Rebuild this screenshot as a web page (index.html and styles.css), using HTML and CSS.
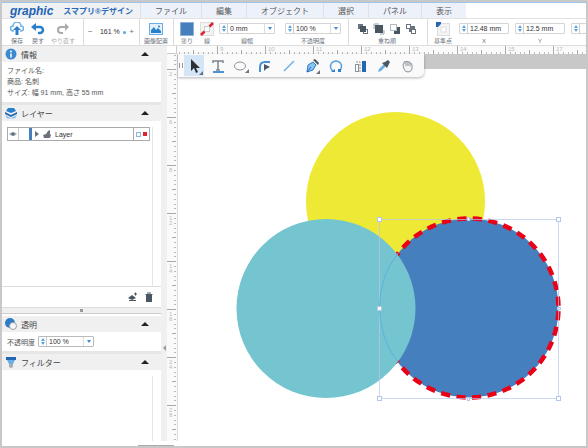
FILE: index.html
```html
<!DOCTYPE html>
<html lang="ja">
<head>
    <meta charset="UTF-8">
    <meta name="viewport" content="width=device-width, initial-scale=1.0">
    <title>スマプリ®デザイン</title>
    <link rel="stylesheet" href="styles.css">
</head>
<body>
    <div class="app">
        <header class="menubar">
            <div class="brand">
                <span class="logo">graphic</span>
                <span class="product">スマプリ®デザイン</span>
            </div>
            <nav class="menu">
                <button>ファイル</button>
                <button>編集</button>
                <button>オブジェクト</button>
                <button>選択</button>
                <button>パネル</button>
                <button>表示</button>
            </nav>
        </header>

        <!-- Toolbar -->
        <div class="toolbar">
            <div class="group group-file">
                <button class="item">
                    <svg viewBox="0 0 14 14"><path d="M4 9H3a2.5 2.5 0 0 1 0-5 4 4 0 0 1 8 0 2.500 2.500 0 0 1 0 5h-1" fill="none" stroke="#6aaee6" stroke-width="1.5"/><path d="M7 4l4 4H8.500v5h-3V8H3z" fill="#2a7fcb"/></svg>
                    <span>保存</span>
                </button>
                <button class="item">
                    <svg viewBox="0 0 14 14"><path d="M3 5h6a3 3 0 0 1 0 6H7" fill="none" stroke="#2a7fcb" stroke-width="2.5"/><path d="M0 5l5-4v8z" fill="#2a7fcb"/></svg>
                    <span>戻す</span>
                </button>
                <button class="item item-wide disabled">
                    <svg viewBox="0 0 14 14"><path d="M10 5H5a3 3 0 0 0 0 6h2" fill="none" stroke="#aaa" stroke-width="2"/><path d="M13 5L9 1v8z" fill="#aaa"/></svg>
                    <span>やり直す</span>
                </button>
            </div>
            <div class="group group-zoom">
                <button aria-label="縮小">−</button>
                <span class="zoom-value">161 %</span>
                <span class="dot"></span>
                <button aria-label="拡大">+</button>
            </div>
            <div class="group group-image">
                <button class="item item-wide">
                    <svg viewBox="0 0 14 14"><rect x="0.5" y="1.5" width="13" height="11" fill="#e4f1fc" stroke="#6aaee6"/><path d="M2 11V8l3-3 2 3 2-2 3 3v2z" fill="#2a7fcb"/><circle cx="10" cy="4.5" r="1" fill="#2a7fcb"/></svg>
                    <span>画像配置</span>
                </button>
            </div>
            <div class="group group-style">
                <button class="item">
                    <svg viewBox="0 0 14 14"><rect x="0.5" y="0.5" width="13" height="13" fill="#467fbd" stroke="#8fb0d6"/></svg>
                    <span>塗り</span>
                </button>
                <button class="item">
                    <svg viewBox="0 0 14 14"><rect x="0.5" y="0.5" width="13" height="13" fill="#f4f4f4" stroke="#ddd"/><rect x="4.5" y="4.5" width="5" height="5" fill="#fff" stroke="#ccc"/><path d="M1 13l3.500-3.500M9.500 4.500L13 1" stroke="#d8232a" stroke-width="2.5"/></svg>
                    <span>線</span>
                </button>
                <div class="field">
                    <div class="combo">
                        <button class="stepper" aria-label="線幅の増減"></button>
                        <input type="text" id="strokeWidth" value="0 mm">
                        <button class="arrow" aria-label="線幅の一覧"></button>
                    </div>
                    <label for="strokeWidth">線幅</label>
                </div>
                <div class="field">
                    <div class="combo">
                        <button class="stepper" aria-label="不透明度の増減"></button>
                        <input type="text" id="opacityTop" value="100 %">
                        <button class="arrow" aria-label="不透明度の一覧"></button>
                    </div>
                    <label for="opacityTop">不透明度</label>
                </div>
            </div>
            <div class="group group-order">
                <div class="order-icons">
                    <button aria-label="前面へ"><svg viewBox="0 0 14 14"><rect x="2" y="2" width="5" height="5" fill="#68737f"/><rect x="7.5" y="7.5" width="4" height="4" fill="#fff" stroke="#68737f"/><rect x="4" y="4" width="6" height="6" fill="#4b5663"/></svg></button>
                    <button aria-label="最前面へ"><svg viewBox="0 0 14 14"><path d="M2 7V2h5M12 8v4H8" fill="none" stroke="#9aa2ab"/><rect x="3" y="3" width="8" height="8" fill="#4b5663"/></svg></button>
                    <button aria-label="最背面へ"><svg viewBox="0 0 14 14"><rect x="6" y="5" width="6" height="7" fill="#4b5663"/><rect x="2.5" y="2.5" width="6" height="6" fill="#fff" stroke="#b4bac1"/></svg></button>
                    <button aria-label="背面へ"><svg viewBox="0 0 14 14"><rect x="5" y="4" width="6" height="6" fill="#68737f"/><rect x="2.5" y="2.5" width="4" height="4" fill="#fff" stroke="#68737f"/><rect x="7.5" y="7.5" width="4" height="4" fill="#fff" stroke="#68737f"/></svg></button>
                </div>
                <span>重ね順</span>
            </div>
            <div class="group group-pos">
                <button class="item">
                    <svg viewBox="0 0 14 14"><rect x="1.5" y="1.5" width="12" height="12" fill="#f4f4f4" stroke="#ddd"/><rect x="5" y="5" width="5" height="5" fill="#fff" stroke="#ddd"/><path d="M0 0h5v2L2 5H0z" fill="#2367b4"/></svg>
                    <span>基準点</span>
                </button>
                <div class="field">
                    <div class="combo combo-short">
                        <button class="stepper" aria-label="Xの増減"></button>
                        <input type="text" id="posX" value="12.48 mm">
                    </div>
                    <label for="posX">X</label>
                </div>
                <div class="field">
                    <div class="combo combo-short">
                        <button class="stepper" aria-label="Yの増減"></button>
                        <input type="text" id="posY" value="12.5 mm">
                    </div>
                    <label for="posY">Y</label>
                </div>
                <div class="field">
                    <div class="combo combo-short">
                        <button class="stepper" aria-label="幅の増減"></button>
                        <input type="text" aria-label="幅">
                    </div>
                </div>
            </div>
        </div>

        <div class="workspace">
            <!-- Panels -->
            <aside class="panels">
                <section>
                    <h2>
                        <svg viewBox="0 0 12 12"><circle cx="6" cy="6" r="5.5" fill="#3b8ad0"/><circle cx="6" cy="3.5" r="1" fill="#fff"/><path d="M6 5.500v4" stroke="#fff" stroke-width="1.5"/></svg>
                        情報<button class="fold" aria-label="閉じる"></button>
                    </h2>
                    <div class="info">
                        <p>ファイル名:</p>
                        <p>商品: 名刺</p>
                        <p>サイズ: 幅 91 mm, 高さ 55 mm</p>
                    </div>
                </section>
                <section>
                    <h2>
                        <svg viewBox="0 0 12 12"><path d="M1 4l2-3h6l2 3-5 2z" fill="#2a7fcb"/><path d="M0 5l6 3 6-3v2l-6 3-6-3z" fill="#2367b4"/><path d="M0 8l6 3 6-3-2 3.500H2z" fill="#8cc2ee"/></svg>
                        レイヤー<button class="fold" aria-label="閉じる"></button>
                    </h2>
                    <div class="layers">
                        <div class="layer">
                            <button class="eye" aria-label="表示切替"><svg viewBox="0 0 8 8"><path d="M0 4q4-4 8 0-4 4-8 0z" fill="#a5adb5"/><circle cx="4" cy="4" r="1.5" fill="#5a6672"/></svg></button>
                            <span class="layer-name">
                                <svg class="caret" viewBox="0 0 4 6"><path d="M0 0l4 3-4 3z" fill="#68737f"/></svg>
                                <svg class="sheet" viewBox="0 0 8 8"><path d="M0 5l3-1 2-3 2-1v4l1 1-1 3H1z" fill="#68737f"/></svg>
                                Layer
                            </span>
                            <span class="layer-mark"><i class="mark-target"></i><i class="mark-color"></i></span>
                        </div>
                    </div>
                    <div class="layer-actions">
                        <button aria-label="レイヤー追加"><svg viewBox="0 0 10 10"><path d="M0 6l4-3 4 3-4 2zM1 8h7v1H1z" fill="#4b5663"/><path d="M6 2h3M7.500 0.500v3" stroke="#4b5663"/></svg></button>
                        <button aria-label="削除"><svg viewBox="0 0 10 10"><path d="M3 1h4M1.500 2.500h7" stroke="#4b5663"/><path d="M2 3h6v7H2z" fill="#4b5663"/></svg></button>
                    </div>
                    <div class="splitter"><i></i></div>
                </section>
                <section>
                    <h2>
                        <svg viewBox="0 0 12 12"><circle cx="5" cy="5" r="5" fill="#2e7cc8"/><circle cx="8" cy="8" r="3.5" fill="#f8f8f8" stroke="#9aa2ab"/></svg>
                        透明<button class="fold" aria-label="閉じる"></button>
                    </h2>
                    <div class="opacity-row">
                        <label for="opacity">不透明度</label>
                        <div class="combo">
                            <button class="stepper" aria-label="増減"></button>
                            <input type="text" id="opacity" value="100 %">
                            <button class="arrow" aria-label="一覧"></button>
                        </div>
                    </div>
                </section>
                <section class="filter">
                    <h2>
                        <svg viewBox="0 0 12 12"><path d="M1 1h10v3H1z" fill="#2367b4"/><path d="M2 4h8L8 8H4z" fill="#6aaee6"/><path d="M4 8h4v3L6 12l-2-1z" fill="#a5adb5"/></svg>
                        フィルター<button class="fold" aria-label="閉じる"></button>
                    </h2>
                    <div class="filter-body"></div>
                </section>
            </aside>
            <div class="divider"><i></i></div>

            <!-- Canvas -->
            <main class="stage">
                <div class="corner"></div>
                <svg class="ruler-h" xmlns="http://www.w3.org/2000/svg">
                    <defs>
                        <pattern id="ticksH" x="40" width="48" height="8" patternUnits="userSpaceOnUse">
                            <path d="M5.500 6v2M10.500 6v2M15.500 6v2M19.500 6v2M29.500 6v2M34.500 6v2M39.500 6v2M43.500 6v2" stroke="#bbb"/>
                            <path d="M0.500 0v8M24.500 4v4" stroke="#aaa"/>
                        </pattern>
                    </defs>
                    <rect width="100%" height="8" fill="url(#ticksH)"/>
                    <text x="43" y="5">9</text>
                    <text x="91" y="5">10</text>
                    <text x="139" y="5">11</text>
                    <text x="187" y="5">12</text>
                    <text x="235" y="5">13</text>
                    <text x="283" y="5">14</text>
                    <text x="331" y="5">15</text>
                    <text x="379" y="5">17</text>
                </svg>
                <svg class="ruler-v" xmlns="http://www.w3.org/2000/svg">
                    <defs>
                        <pattern id="ticksV" y="63" width="10" height="48" patternUnits="userSpaceOnUse">
                            <path d="M7 5.500h2M7 10.500h2M7 15.500h2M7 19.500h2M7 29.500h2M7 34.500h2M7 39.500h2M7 43.500h2" stroke="#bbb"/>
                            <path d="M0 0.500h9M5 24.500h4" stroke="#aaa"/>
                        </pattern>
                    </defs>
                    <rect width="10" height="100%" fill="url(#ticksV)"/>
                    <text x="2" y="22">2</text>
                    <text x="2" y="70">6</text>
                    <text x="2" y="118">8</text>
                    <text x="2" y="166">1</text><text x="2" y="171">2</text>
                    <text x="2" y="214">1</text><text x="2" y="219">4</text>
                    <text x="2" y="262">1</text><text x="2" y="267">8</text>
                    <text x="2" y="310">2</text><text x="2" y="315">4</text>
                    <text x="2" y="358">2</text><text x="2" y="363">8</text>
                </svg>
                <div class="canvas">
                    <svg class="art" viewBox="1 0 408 376" preserveAspectRatio="xMinYMin meet">
                        <circle cx="218.5" cy="132.5" r="89.5" fill="#eee935"/>
                        <circle cx="292" cy="239" r="89.5" fill="#467fbd" stroke="#ea0017" stroke-width="4.5" stroke-dasharray="9.200 6.420" stroke-dashoffset="-3.200"/>
                        <circle cx="149" cy="239.5" r="89.5" fill="#74c5d0"/>
                        <g fill="none" stroke="#b3c7ec">
                            <rect x="202.5" y="150.5" width="179" height="179" stroke-opacity="0.7"/>
                            <path d="M221 184a89.500 89.500 0 0 0 0 109" stroke="#5fb0dc"/>
                        </g>
                        <g fill="#fff" stroke="#b3c7ec">
                            <rect x="200.5" y="148.5" width="4" height="4"/>
                            <rect x="290.5" y="148.5" width="2" height="3"/>
                            <rect x="379.5" y="148.5" width="4" height="4"/>
                            <rect x="200.5" y="237.5" width="4" height="4"/>
                            <rect x="380.5" y="238.5" width="3" height="2"/>
                            <rect x="200.5" y="327.5" width="4" height="4"/>
                            <rect x="290.5" y="328.5" width="2" height="3"/>
                            <rect x="379.5" y="327.5" width="4" height="4"/>
                        </g>
                    </svg>
                    <div class="palette">
                        <i class="grip"></i>
                        <div class="tools">
                            <button class="active" aria-label="選択"><svg viewBox="0 0 20 20"><path d="M7 3v12l3-3 2 5 2-1-2-4h4z" fill="#2c2f33"/><path d="M19 15v4h-4z" fill="#68737f"/></svg></button>
                            <button aria-label="文字"><svg viewBox="0 0 20 20"><path d="M5 7V5h10v2M10 5v9M8 14h4" fill="none" stroke="#7c858f" stroke-width="1.5"/><path d="M5 16h11" stroke="#4a92d4" stroke-width="2"/></svg></button>
                            <button aria-label="楕円"><svg viewBox="0 0 20 20"><ellipse cx="9" cy="10" rx="5.5" ry="4" fill="none" stroke="#8b939b"/><path d="M18 13v4h-4z" fill="#68737f"/></svg></button>
                            <button aria-label="角丸"><svg viewBox="0 0 20 20"><path d="M5 16v-5q0-5 5-5h5" fill="none" stroke="#4a92d4" stroke-width="2"/><path d="M9 8v7l2-2 4-2z" fill="#4b5663"/></svg></button>
                            <button aria-label="直線"><svg viewBox="0 0 20 20"><path d="M5 15L15 5" stroke="#6aaee6" stroke-width="1.5"/></svg></button>
                            <button aria-label="ペン"><svg viewBox="0 0 20 20"><path d="M5 16l1-7 5-3 3 3-3 5z" fill="#8cc2ee" stroke="#2a7fcb"/><path d="M5 16l4-5" stroke="#2367b4"/><path d="M11 4l5 5 1-2-4-4z" fill="#4b5663"/><path d="M18 14v4h-4z" fill="#68737f"/></svg></button>
                            <button aria-label="回転"><svg viewBox="0 0 20 20"><path d="M7 15a5.500 5.500 0 1 1 6 0" fill="none" stroke="#5aa3de" stroke-width="1.5"/><path d="M5 16h4v-3zM12 13h3v3h-3z" fill="#2a7fcb"/></svg></button>
                            <button aria-label="反転"><svg viewBox="0 0 20 20"><rect x="5.5" y="8.5" width="3" height="7" fill="#fff" stroke="#8b939b"/><path d="M6 6h4v10" fill="none" stroke="#8b939b" stroke-dasharray="2 1"/><rect x="12" y="5" width="4" height="11" fill="#2367b4"/></svg></button>
                            <button aria-label="スポイト"><svg viewBox="0 0 20 20"><path d="M5 16l1-3 5-5 2 2-5 5z" fill="#6aaee6"/><path d="M9 7l5 5 1-2 2-4-2-2-3 2z" fill="#4b5663"/></svg></button>
                            <button aria-label="手のひら"><svg viewBox="0 0 20 20"><path d="M6 9q0-2 1-1V6q1-1 2 0 1-2 2 0 2-1 2 1 2 0 2 2v4q-1 3-4 3-3 0-4-3z" fill="#f4f4f4" stroke="#8b939b"/><path d="M9 6v4M11 6v4M13 7v3" stroke="#8b939b"/></svg></button>
                        </div>
                    </div>
                </div>
            </main>
        </div>
        <footer class="statusbar"><i></i></footer>
    </div>
</body>
</html>
```
FILE: styles.css
```css
* {
    margin: 0;
    padding: 0;
    box-sizing: border-box;
}

body {
    font-family: "Liberation Sans", "Noto Sans CJK JP", sans-serif;
    font-size: 7px;
    color: #555;
    background-color: #fff;
}

button {
    font: inherit;
    color: inherit;
    background: none;
    border: none;
    cursor: pointer;
}

svg {
    display: block;
    flex: none;
}

.app {
    display: flex;
    flex-direction: column;
    height: 100vh;
    border: 2px solid #c8c8c8;
    overflow: hidden;
}

/* Menu */
.menubar {
    display: flex;
    flex: none;
    height: 17px;
    border-top: 1px solid #9cc3ea;
    border-bottom: 1px solid #e2e2e2;
}

.brand {
    display: flex;
    align-items: center;
    gap: 10px;
    width: 138px;
    padding-left: 8px;
    background-color: #f0f1f3;
    white-space: nowrap;
}

.logo {
    font-size: 12px;
    font-weight: bold;
    font-style: italic;
    color: #1d63b4;
}

.product {
    font-size: 8px;
    font-weight: bold;
    color: #2a6bb8;
}

.menu {
    display: flex;
}

.menu button {
    padding: 0 14px;
    font-size: 8px;
    background-color: #edf2fa;
    border-left: 1px solid #dbe2ec;
}

/* Toolbar */
.toolbar {
    display: flex;
    flex: none;
    height: 27px;
    overflow: hidden;
    font-size: 6px;
    line-height: 8px;
    color: #6a717c;
    border-bottom: 1px solid #ddd;
}

.group {
    display: flex;
    flex: none;
    padding-top: 3px;
    border-right: 1px solid #ddd;
}

.item {
    display: flex;
    flex-direction: column;
    align-items: center;
    gap: 1px;
    width: 20px;
    white-space: nowrap;
}

.item-wide {
    width: 28px;
}

.item svg,
.order-icons svg {
    width: 14px;
    height: 14px;
}

.disabled {
    color: #aaa;
}

.group-file {
    gap: 1px;
    width: 82px;
    padding-left: 5px;
}

.group-zoom {
    align-items: center;
    justify-content: space-between;
    width: 56px;
    padding: 0 5px 0 4px;
    font-size: 8px;
}

.zoom-value {
    padding-left: 4px;
    font-size: 7px;
    color: #333;
}

.dot {
    width: 3px;
    height: 3px;
    border-radius: 50%;
    background-color: #5aa3de;
}

.group-image {
    padding-left: 2px;
    padding-right: 3px;
}

.group-style {
    padding-left: 3px;
    padding-right: 7px;
}

.group-style .field {
    margin-left: 2px;
}

.group-style .field + .field {
    margin-left: 10px;
}

.field {
    display: flex;
    flex-direction: column;
    align-items: center;
    gap: 3px;
    padding-top: 1px;
}

.combo {
    display: flex;
    width: 56px;
    height: 11px;
    background-color: #fff;
    border: 1px solid #d5d5d5;
    border-radius: 1px;
}

.combo-short {
    width: 50px;
}

.combo input {
    flex: 1;
    min-width: 0;
    padding-left: 2px;
    font: inherit;
    font-size: 7px;
    color: #333;
    background: none;
    border: none;
    outline: none;
}

.stepper {
    display: flex;
    flex-direction: column;
    align-items: center;
    justify-content: center;
    gap: 1px;
    width: 8px;
    border-right: 1px solid #ccc;
}

.stepper::before,
.stepper::after {
    content: "";
    border-left: 2px solid transparent;
    border-right: 2px solid transparent;
}

.stepper::before {
    border-bottom: 3px solid #5aa3de;
}

.stepper::after {
    border-top: 3px solid #5aa3de;
}

.arrow {
    display: flex;
    align-items: center;
    justify-content: center;
    width: 10px;
    border-left: 1px solid #ddd;
}

.arrow::before {
    content: "";
    border-left: 2px solid transparent;
    border-right: 2px solid transparent;
    border-top: 3px solid #3b8ad0;
}

.group-order {
    flex-direction: column;
    align-items: center;
    gap: 1px;
    padding-left: 7px;
    padding-right: 9px;
}

.order-icons {
    display: flex;
    gap: 2px;
}

.group-pos {
    gap: 6px;
    padding-left: 5px;
    border-right: none;
}

/* Workspace */
.workspace {
    display: flex;
    flex: 1;
    min-height: 0;
}

.panels {
    display: flex;
    flex-direction: column;
    flex: none;
    width: 159px;
}

.panels h2 {
    display: flex;
    align-items: center;
    gap: 4px;
    height: 16px;
    padding: 0 12px 0 3px;
    font-size: 8px;
    font-weight: normal;
    color: #444;
    background-color: #f0f0f0;
}

.panels h2 svg {
    width: 12px;
    height: 12px;
}

.fold {
    margin-left: auto;
    border-left: 4px solid transparent;
    border-right: 4px solid transparent;
    border-bottom: 4px solid #222;
}

.info {
    padding: 3px 5px 4px;
    line-height: 11px;
    border-bottom: 3px solid #e6e6e6;
}

.layers {
    height: 166px;
    padding: 6px 11px 6px 5px;
    border-bottom: 1px solid #ddd;
}

.layer {
    display: flex;
    height: 14px;
    border: 1px solid #aaa;
}

.eye {
    width: 11px;
    padding: 0 1px;
    border-right: 1px solid #ccc;
}

.layer-name {
    display: flex;
    flex: 1;
    align-items: center;
    gap: 4px;
    margin-left: 10px;
    padding-left: 3px;
    color: #333;
    border-left: 3px solid #467fbd;
}

.caret {
    width: 4px;
    height: 6px;
}

.sheet {
    width: 8px;
    height: 8px;
}

.layer-mark {
    display: flex;
    align-items: center;
    gap: 2px;
    padding: 0 2px;
    border-left: 1px solid #aaa;
}

.mark-target {
    width: 5px;
    height: 5px;
    border: 1px solid #8cb8e4;
}

.mark-color {
    width: 4px;
    height: 4px;
    background-color: #e8202a;
}

.layer-actions {
    display: flex;
    align-items: center;
    justify-content: flex-end;
    gap: 6px;
    height: 20px;
    padding-right: 7px;
}

.layer-actions svg {
    width: 10px;
    height: 10px;
}

.splitter {
    display: flex;
    align-items: center;
    justify-content: center;
    height: 7px;
    margin-bottom: 2px;
    background-color: #f0f0f0;
    border-top: 1px solid #ddd;
    border-bottom: 1px solid #ccc;
}

.splitter i {
    width: 3px;
    height: 3px;
    background-color: #999;
}

.opacity-row {
    display: flex;
    align-items: center;
    gap: 3px;
    height: 22px;
    padding-left: 5px;
    border-bottom: 3px solid #e6e6e6;
}

.opacity-row .combo {
    border-color: #bbb;
}

.filter {
    display: flex;
    flex: 1;
    flex-direction: column;
}

.layers,
.filter-body {
    background: linear-gradient(#e6e6e6, #e6e6e6) no-repeat right 8px top 6px / 1px 100%;
}

.filter-body {
    flex: 1;
}

.divider {
    display: flex;
    align-items: center;
    justify-content: center;
    flex: none;
    width: 6px;
    background-color: #f0f0f0;
}

.divider i {
    margin-top: 208px;
    border-top: 3px solid transparent;
    border-bottom: 3px solid transparent;
    border-right: 3px solid #999;
}

.stage {
    display: grid;
    flex: 1;
    grid-template-columns: 10px 1fr;
    grid-template-rows: 8px 1fr;
    min-width: 0;
}

.corner {
    border-right: 1px solid #ccc;
    border-bottom: 1px solid #ccc;
}

.ruler-h,
.ruler-v {
    width: 100%;
    height: 100%;
    font-size: 6px;
    fill: #bbb;
    background-color: #fafafa;
}

.canvas {
    position: relative;
    min-height: 0;
    border-top: 15px solid #c8c8c8;
    border-left: 1px solid #ddd;
}

.art {
    width: 100%;
    height: auto;
}

/* Floating tool palette over the canvas */
.palette {
    position: absolute;
    top: -15px;
    left: 0;
    display: flex;
    align-items: center;
    width: 246px;
    height: 23px;
    padding-right: 7px;
    background-color: #fafafa;
    border-radius: 0 0 5px 0;
    box-shadow: 0 1px 3px rgba(0, 0, 0, 0.3);
}

.grip {
    width: 4px;
    height: 5px;
    margin: 0 1px;
    border-left: 1px solid #999;
    border-right: 1px solid #999;
}

.tools {
    display: flex;
    flex: 1;
    justify-content: space-between;
}

.tools button {
    width: 20px;
    height: 21px;
}

.tools .active {
    background-color: #d3e5f6;
}

.statusbar {
    flex: none;
    height: 5px;
    padding: 4px 0 0 136px;
}

.statusbar i {
    display: block;
    width: 36px;
    height: 1px;
    background-color: #aaa;
}
```
